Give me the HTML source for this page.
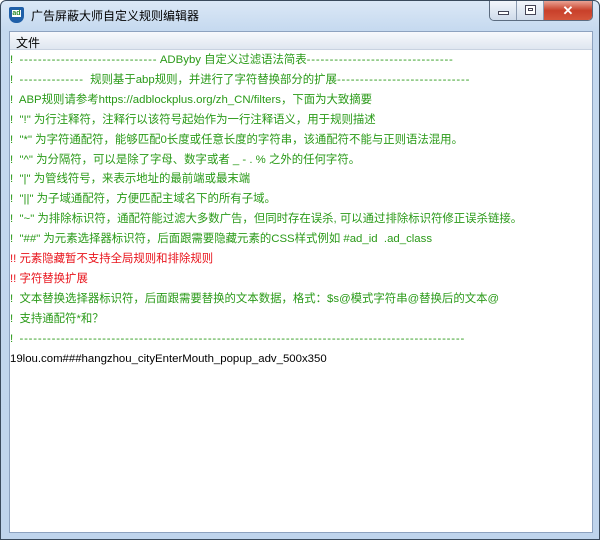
<!DOCTYPE html>
<html><head><meta charset="utf-8"><style>
*{margin:0;padding:0;box-sizing:border-box}
body{width:600px;height:540px;overflow:hidden;background:#fff;font-family:"Liberation Sans","Noto Sans CJK SC",sans-serif}
.win{position:absolute;left:0;top:0;width:600px;height:540px;border:1px solid #3a4a5c;border-radius:6px 6px 0 0;background:linear-gradient(#dbe8f6,#c5d9ef 30px,#bfd4ec);}
.title{position:absolute;left:30px;top:6px;font-size:12px;color:#000}
.icon{position:absolute;left:8px;top:6px;width:15px;height:16px;background:#1f5fa8;border-radius:2px 2px 7px 7px}
.icon i{position:absolute;left:3px;top:3px;width:9px;height:7px;background:#fff;font-style:normal;font-size:7px;color:#2a8a2a;line-height:7px;text-align:center;font-weight:bold}
.btns{position:absolute;right:6px;top:0;height:20px;display:flex;border:1px solid #5c6c80;border-top:none;border-radius:0 0 5px 5px;overflow:hidden}
.b{width:27px;height:19px;background:linear-gradient(#f2f6fb,#cfdbea);border-right:1px solid #8a9ab0;position:relative}
.x{width:48px;background:linear-gradient(#e9a293,#c8402a 50%,#d5553b)}
.client{position:absolute;left:8px;top:30px;width:584px;height:502px;border:1px solid #8da2bf;background:#fff}
.menu{height:18px;background:linear-gradient(#f7f9fc,#dfe6f0);border-bottom:1px solid #c8d2e0;font-size:12px;padding:2px 0 0 6px}
.txt{font-size:11.4px;line-height:19.9px;padding-top:1px;white-space:pre}
.d{letter-spacing:0.8px}
.g{color:#2a9a18}.r{color:#e8141c}.k{color:#000}
</style></head><body>
<div class="win">
<div class="icon"><i>ad</i></div>
<div class="title">广告屏蔽大师自定义规则编辑器</div>
<div class="btns"><div class="b"><div style="position:absolute;left:8px;top:10px;width:11px;height:4px;background:#fff;border:1px solid #445"></div></div><div class="b"><div style="position:absolute;left:8px;top:4px;width:11px;height:10px;border:1px solid #445;background:#fff"><div style="margin:2px;height:3px;border:1px solid #445"></div></div></div><div class="b x" style="border:none;color:#fff;font-weight:bold;font-size:13px;text-align:center;line-height:19px">✕</div></div>
<div class="client">
<div class="menu">文件</div>
<div class="txt"><div class="g">!  <span class="d">------------------------------</span> ADByby 自定义过滤语法简表<span class="d">--------------------------------</span></div><div class="g">!  <span class="d">--------------</span>  规则基于abp规则，并进行了字符替换部分的扩展<span class="d">-----------------------------</span></div><div class="g">!  ABP规则请参考https://adblockplus.org/zh_CN/filters，下面为大致摘要</div><div class="g">!  "!" 为行注释符，注释行以该符号起始作为一行注释语义，用于规则描述</div><div class="g">!  "*" 为字符通配符，能够匹配0长度或任意长度的字符串，该通配符不能与正则语法混用。</div><div class="g">!  "^" 为分隔符，可以是除了字母、数字或者 _ - . % 之外的任何字符。</div><div class="g">!  "|" 为管线符号，来表示地址的最前端或最末端</div><div class="g">!  "||" 为子域通配符，方便匹配主域名下的所有子域。</div><div class="g">!  "~" 为排除标识符，通配符能过滤大多数广告，但同时存在误杀, 可以通过排除标识符修正误杀链接。</div><div class="g">!  "##" 为元素选择器标识符，后面跟需要隐藏元素的CSS样式例如 #ad_id  .ad_class</div><div class="r">!! 元素隐藏暂不支持全局规则和排除规则</div><div class="r">!! 字符替换扩展</div><div class="g">!  文本替换选择器标识符，后面跟需要替换的文本数据，格式：$s@模式字符串@替换后的文本@</div><div class="g">!  支持通配符*和？</div><div class="g">!  <span class="d">-------------------------------------------------------------------------------------------------</span></div><div class="k">19lou.com###hangzhou_cityEnterMouth_popup_adv_500x350</div></div>
</div>
</div>
</body></html>
